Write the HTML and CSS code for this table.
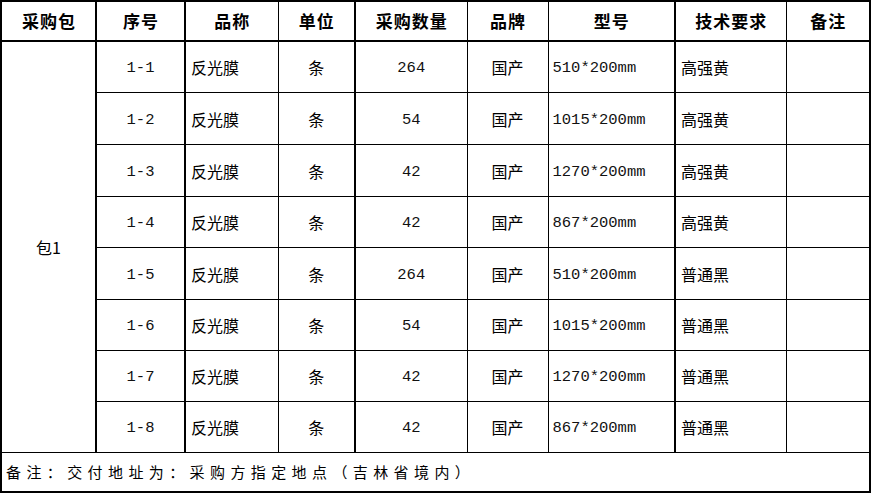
FILE: index.html
```html
<!DOCTYPE html>
<html lang="zh-CN">
<head>
<meta charset="utf-8">
<title>采购表</title>
<link rel="stylesheet" href="styles.css">
</head>
<body>
<table class="grid">
  <colgroup>
    <col class="c0"><col class="c1"><col class="c2"><col class="c3"><col class="c4"><col class="c5"><col class="c6"><col class="c7"><col class="c8">
  </colgroup>
  <thead>
    <tr class="head">
      <th class="tk">采购包</th>
      <th class="tk">序号</th>
      <th>品称</th>
      <th class="tk">单位</th>
      <th>采购数量</th>
      <th>品牌</th>
      <th class="tk">型号</th>
      <th>技术要求</th>
      <th class="tk">备注</th>
    </tr>
  </thead>
  <tbody>
    <tr class="r51">
      <td class="tk pkg" rowspan="8">包1</td>
      <td class="tk num">1-1</td><td class="left">反光膜</td><td class="tk">条</td><td class="num">264</td><td>国产</td><td class="tk left num">510*200mm</td><td class="left">高强黄</td><td class="tk"></td>
    </tr>
    <tr class="r52">
      <td class="tk num">1-2</td><td class="left">反光膜</td><td class="tk">条</td><td class="num">54</td><td>国产</td><td class="tk left num">1015*200mm</td><td class="left">高强黄</td><td class="tk"></td>
    </tr>
    <tr class="r52">
      <td class="tk num">1-3</td><td class="left">反光膜</td><td class="tk">条</td><td class="num">42</td><td>国产</td><td class="tk left num">1270*200mm</td><td class="left">高强黄</td><td class="tk"></td>
    </tr>
    <tr class="r51">
      <td class="tk num">1-4</td><td class="left">反光膜</td><td class="tk">条</td><td class="num">42</td><td>国产</td><td class="tk left num">867*200mm</td><td class="left">高强黄</td><td class="tk"></td>
    </tr>
    <tr class="r52">
      <td class="tk num">1-5</td><td class="left">反光膜</td><td class="tk">条</td><td class="num">264</td><td>国产</td><td class="tk left num">510*200mm</td><td class="left">普通黑</td><td class="tk"></td>
    </tr>
    <tr class="r51">
      <td class="tk num">1-6</td><td class="left">反光膜</td><td class="tk">条</td><td class="num">54</td><td>国产</td><td class="tk left num">1015*200mm</td><td class="left">普通黑</td><td class="tk"></td>
    </tr>
    <tr class="r51">
      <td class="tk num">1-7</td><td class="left">反光膜</td><td class="tk">条</td><td class="num">42</td><td>国产</td><td class="tk left num">1270*200mm</td><td class="left">普通黑</td><td class="tk"></td>
    </tr>
    <tr class="r51">
      <td class="tk num">1-8</td><td class="left">反光膜</td><td class="tk">条</td><td class="num">42</td><td>国产</td><td class="tk left num">867*200mm</td><td class="left">普通黑</td><td class="tk"></td>
    </tr>
    <tr class="foot">
      <td colspan="9" class="note">备注：交付地址为：采购方指定地点（吉林省境内）</td>
    </tr>
  </tbody>
</table>
</body>
</html>
```

FILE: styles.css
```css
html, body {
  margin: 0;
  padding: 0;
  background: #ffffff;
}

.grid {
  border-collapse: collapse;
  table-layout: fixed;
  width: 871px;
  border: 2px solid #000;
  color: #000;
  font-family: "Noto Sans CJK SC", "Liberation Serif", serif;
  font-size: 16px;
}

.c0 { width: 95px; }
.c1 { width: 89px; }
.c2 { width: 93px; }
.c3 { width: 77px; }
.c4 { width: 112px; }
.c5 { width: 81px; }
.c6 { width: 127px; }
.c7 { width: 111px; }
.c8 { width: 84px; }

.grid th,
.grid td {
  border: 1px solid #000;
  padding: 0;
  text-align: center;
  vertical-align: middle;
  line-height: 20px;
  white-space: nowrap;
  overflow: hidden;
}

.grid .tk {
  border-right-width: 2px;
}

.head th {
  height: 38px;
  font-weight: bold;
  font-size: 17px;
  letter-spacing: 1px;
  border-bottom-width: 2px;
  padding-left: 1px;
}

.r52 td { height: 51px; }
.r51 td { height: 50px; }

.grid td.left {
  text-align: left;
  padding-left: 5px;
}

.grid td.num {
  font-family: "Liberation Mono", "Noto Sans CJK SC", monospace;
  font-size: 15.5px;
  color: #111;
  padding-top: 2px;
}

.r52 td.num { height: 49px; }
.r51 td.num { height: 48px; }

.grid td.num.left {
  padding-left: 4px;
}

.grid td.pkg {
  font-family: "Noto Sans CJK SC", sans-serif;
  padding-left: 0;
}

.foot td {
  height: 38px;
  border-bottom-width: 2px;
}

.grid td.note {
  text-align: left;
  padding-left: 4px;
  font-size: 15px;
  letter-spacing: 5.4px;
}
```
